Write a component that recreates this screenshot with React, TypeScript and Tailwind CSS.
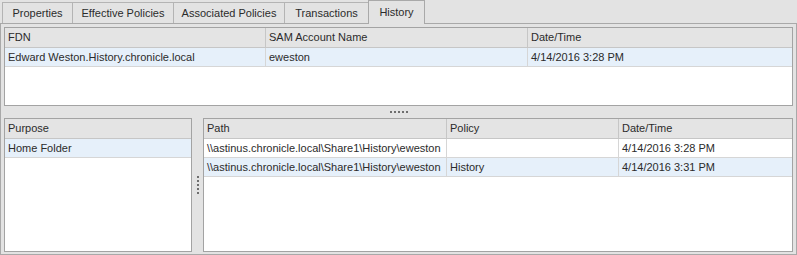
import React from 'react'

const font = { fontFamily: '"Liberation Sans", Arial, sans-serif' }

const tabs = ['Properties', 'Effective Policies', 'Associated Policies', 'Transactions', 'History']
const tabWidths = ['w-[70px]', 'w-[101px]', 'w-[111px]', 'w-[84px]', 'w-[57px]']

function Tabs() {
  return (
    <div className="flex items-end h-[23px] pl-[2px]">
      {tabs.map((t, i) => {
        const active = i === tabs.length - 1
        return (
          <div
            key={t}
            className={
              active
                ? `${tabWidths[i]} h-[24px] -mb-px relative z-10 bg-[#e3e3e3] border border-b-0 border-[#a9a9a9] flex items-start pt-[3px] justify-center text-[11px] text-[#2b2b2b]`
                : `${tabWidths[i]} h-[21px] bg-[#e3e3e3] border border-b-0 border-r-0 border-[#b4b4b4] flex items-center justify-center text-[11px] text-[#2b2b2b]`
            }
          >
            {t}
          </div>
        )
      })}
    </div>
  )
}

type Col = { title: string; w?: string }

function Grid({ cols, rows, selected, className }: { cols: Col[]; rows: string[][]; selected: number[]; className: string }) {
  return (
    <div className={`bg-white border border-[#a3a3a3] flex flex-col ${className}`}>
      <div className="flex h-[20px] bg-[#e4e4e4] border-b border-[#c6c6c6] shrink-0">
        {cols.map((c, i) => (
          <div
            key={i}
            className={`${c.w ?? 'flex-1'} flex items-center pl-[3px] text-[11px] text-[#2b2b2b] ${i < cols.length - 1 ? 'border-r border-[#c6c6c6]' : ''}`}
          >
            {c.title}
          </div>
        ))}
      </div>
      {rows.map((r, ri) => (
        <div key={ri} className={`flex h-[19px] border-b border-[#d6d6d6] shrink-0 ${selected.includes(ri) ? 'bg-[#e6f0fa]' : 'bg-white'}`}>
          {r.map((cell, ci) => (
            <div
              key={ci}
              className={`${cols[ci].w ?? 'flex-1'} flex items-center pl-[3px] text-[11px] text-[#2b2b2b] whitespace-nowrap overflow-hidden ${ci < r.length - 1 ? 'border-r border-[#d6d6d6]' : ''}`}
            >
              {cell}
            </div>
          ))}
        </div>
      ))}
    </div>
  )
}

function Dots({ vertical }: { vertical?: boolean }) {
  return (
    <div className={`flex ${vertical ? 'flex-col' : 'flex-row'} gap-[2px]`}>
      {[0, 1, 2, 3, 4].map(i => (
        <div key={i} className="w-[2px] h-[2px] bg-[#6e6e6e]" />
      ))}
    </div>
  )
}

export default function App() {
  return (
    <div className="w-[797px] h-[255px] bg-[#e3e3e3] overflow-hidden" style={font}>
      <Tabs />
      <div className="h-[232px] border border-[#a9a9a9] pt-[3px] px-[3px] pb-[2px] flex flex-col">
        {/* Top grid */}
        <Grid
          className="h-[79px] shrink-0"
          cols={[{ title: 'FDN', w: 'w-[261px]' }, { title: 'SAM Account Name', w: 'w-[262px]' }, { title: 'Date/Time' }]}
          rows={[['Edward Weston.History.chronicle.local', 'eweston', '4/14/2016 3:28 PM']]}
          selected={[0]}
        />
        {/* Horizontal splitter */}
        <div className="h-[12px] shrink-0 flex items-center justify-center">
          <Dots />
        </div>
        {/* Bottom grids */}
        <div className="flex h-[134px]">
          <Grid
            className="w-[188px] h-full shrink-0"
            cols={[{ title: 'Purpose' }]}
            rows={[['Home Folder']]}
            selected={[0]}
          />
          <div className="w-[11px] shrink-0 flex items-center justify-center">
            <Dots vertical />
          </div>
          <Grid
            className="flex-1 h-full"
            cols={[{ title: 'Path', w: 'w-[243px]' }, { title: 'Policy', w: 'w-[172px]' }, { title: 'Date/Time' }]}
            rows={[
              ['\\\\astinus.chronicle.local\\Share1\\History\\eweston', '', '4/14/2016 3:28 PM'],
              ['\\\\astinus.chronicle.local\\Share1\\History\\eweston', 'History', '4/14/2016 3:31 PM'],
            ]}
            selected={[1]}
          />
        </div>
      </div>
    </div>
  )
}
